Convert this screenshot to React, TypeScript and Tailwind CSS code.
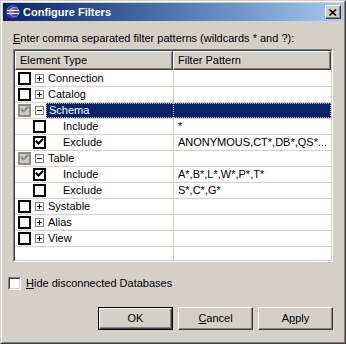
import React from "react";

type Row = {
  label: string;
  level: 0 | 1;
  toggle?: "+" | "-";
  check: "off" | "on" | "grey";
  pattern?: string;
  selected?: boolean;
};

const rows: Row[] = [
  { label: "Connection", level: 0, toggle: "+", check: "off" },
  { label: "Catalog", level: 0, toggle: "+", check: "off" },
  { label: "Schema", level: 0, toggle: "-", check: "grey", selected: true },
  { label: "Include", level: 1, check: "off", pattern: "*" },
  { label: "Exclude", level: 1, check: "on", pattern: "ANONYMOUS,CT*,DB*,QS*..." },
  { label: "Table", level: 0, toggle: "-", check: "grey" },
  { label: "Include", level: 1, check: "on", pattern: "A*,B*,L*,W*,P*,T*" },
  { label: "Exclude", level: 1, check: "off", pattern: "S*,C*,G*" },
  { label: "Systable", level: 0, toggle: "+", check: "off" },
  { label: "Alias", level: 0, toggle: "+", check: "off" },
  { label: "View", level: 0, toggle: "+", check: "off" },
];

function CheckMark({ color }: { color: string }) {
  return (
    <svg width="9" height="9" viewBox="0 0 9 9" className="block">
      <path d="M1.5 3.5 L3.5 5.5 L7.5 1.5" stroke={color} strokeWidth="2" fill="none" strokeLinecap="square" />
    </svg>
  );
}

function TreeCheck({ state }: { state: Row["check"] }) {
  if (state === "grey") {
    return (
      <div className="w-[13px] h-[13px] border-2 border-[#8c8c8c] bg-[#cfcbc3] flex items-center justify-center">
        <CheckMark color="#8c8c8c" />
      </div>
    );
  }
  return (
    <div className="w-[13px] h-[13px] border-2 border-black bg-white flex items-center justify-center">
      {state === "on" && <CheckMark color="#000" />}
    </div>
  );
}

function Toggle({ sign }: { sign: "+" | "-" }) {
  return (
    <div className="relative w-[9px] h-[9px] border border-[#808080] bg-white">
      <div className="absolute left-[1px] top-[3px] w-[5px] h-[1px] bg-black" />
      {sign === "+" && <div className="absolute left-[3px] top-[1px] w-[1px] h-[5px] bg-black" />}
    </div>
  );
}

function Button({ children, isDefault }: { children: React.ReactNode; isDefault?: boolean }) {
  const face = (
    <div className="w-full h-full border border-t-white border-l-white border-b-[#404040] border-r-[#404040] shadow-[inset_-1px_-1px_0_#808080] flex items-center justify-center">
      {children}
    </div>
  );
  return isDefault ? (
    <div className="w-[75px] h-[23px] border border-black">{face}</div>
  ) : (
    <div className="w-[75px] h-[23px]">{face}</div>
  );
}

export default function App() {
  return (
    <div className="w-[346px] h-[344px] bg-[#d4d0c8] text-[11px] leading-[13px] text-black font-['Liberation_Sans',Arial,sans-serif]">
      <div className="w-full h-full border border-t-[#d4d0c8] border-l-[#d4d0c8] border-r-[#404040] border-b-[#404040]">
        <div className="w-full h-full border border-t-white border-l-white border-r-[#808080] border-b-[#808080] p-[1px] flex flex-col">
          {/* Title bar */}
          <div className="h-[18px] flex items-center pl-[2px] pr-[2px] bg-gradient-to-r from-[#0a246a] to-[#a6caf0]">
            <svg width="16" height="16" viewBox="0 0 16 16" className="shrink-0">
              <defs>
                <radialGradient id="ec" cx="40%" cy="35%" r="70%">
                  <stop offset="0%" stopColor="#8b7fd0" />
                  <stop offset="100%" stopColor="#2a1f6a" />
                </radialGradient>
              </defs>
              <circle cx="8" cy="8" r="7" fill="url(#ec)" />
              <path d="M3 8 A5.5 5.5 0 0 1 12 3.5 A6 6 0 0 0 3 8 Z" fill="#1a124a" />
              <rect x="2" y="6" width="12" height="1" fill="#fff" />
              <rect x="2" y="9" width="12" height="1" fill="#fff" />
              <circle cx="9.5" cy="8" r="4.6" fill="none" stroke="#c9c0f0" strokeWidth="0.6" />
            </svg>
            <span className="ml-[2px] font-bold text-white">Configure Filters</span>
            <div className="ml-auto w-[16px] h-[14px] bg-[#d4d0c8] border border-t-white border-l-white border-b-[#404040] border-r-[#404040] shadow-[inset_-1px_-1px_0_#808080] flex items-center justify-center">
              <svg width="8" height="7" viewBox="0 0 8 7" className="block">
                <path d="M0.5 0.5 L7 6.5 M7 0.5 L0.5 6.5" stroke="#000" strokeWidth="1.6" />
              </svg>
            </div>
          </div>

          {/* Body */}
          <div className="flex-1 flex flex-col px-[5px]">
            <div className="mx-[5px] mt-[11px]">
              <span className="underline">E</span>nter comma separated filter patterns (wildcards * and ?):
            </div>

            <div className="mx-[5px] mt-[4px] h-[213px] border border-t-[#808080] border-l-[#808080] border-r-white border-b-white">
              <div className="w-full h-full border border-t-[#404040] border-l-[#404040] border-r-[#d4d0c8] border-b-[#d4d0c8] bg-white flex flex-col">
                {/* Header */}
                <div className="flex h-[19px] shrink-0">
                  <div className="w-[158px] border border-t-white border-l-white border-b-[#404040] border-r-[#404040] shadow-[inset_-1px_-1px_0_#808080] bg-[#d4d0c8] flex items-center pl-[4px]">
                    Element Type
                  </div>
                  <div className="flex-1 border border-t-white border-l-white border-b-[#404040] border-r-[#404040] shadow-[inset_-1px_-1px_0_#808080] bg-[#d4d0c8] flex items-center pl-[4px]">
                    Filter Pattern
                  </div>
                </div>

                {/* Rows */}
                <div className="flex flex-col pt-[1px]">
                  {rows.map((r, i) => (
                    <div key={i} className="flex h-[16px] border-b border-[#d4d0c8]">
                      <div className={`w-[158px] flex items-center ${r.level === 0 ? "pl-[3px]" : "pl-[18px]"}`}>
                        <TreeCheck state={r.check} />
                        {r.toggle && (
                          <div className="ml-[4px]">
                            <Toggle sign={r.toggle} />
                          </div>
                        )}
                        {r.level === 0 ? (
                          <div
                            className={
                              r.selected
                                ? "ml-[2px] h-full flex-1 flex items-center pl-[2px] bg-[#0a246a] text-white border-y border-l border-dotted border-[#c8b878]"
                                : "ml-[2px] pl-[2px]"
                            }
                          >
                            {r.label}
                          </div>
                        ) : (
                          <div className="ml-[17px]">{r.label}</div>
                        )}
                      </div>
                      <div
                        className={
                          r.selected
                            ? "flex-1 flex items-center pl-[4px] border-l border-[#d4d0c8] bg-[#0a246a] text-white border-y border-r border-dotted border-y-[#c8b878] border-r-[#c8b878]"
                            : "flex-1 flex items-center pl-[4px] border-l border-[#d4d0c8] whitespace-nowrap overflow-hidden"
                        }
                      >
                        {r.pattern}
                      </div>
                    </div>
                  ))}
                </div>
                <div className="flex-1 flex">
                  <div className="w-[158px]" />
                  <div className="flex-1 border-l border-[#d4d0c8]" />
                </div>
              </div>
            </div>

            {/* Hide disconnected */}
            <div className="flex items-center mt-[15px]">
              <div className="w-[13px] h-[13px] border border-t-[#808080] border-l-[#808080] border-r-white border-b-white">
                <div className="w-full h-full border border-t-[#404040] border-l-[#404040] border-r-[#d4d0c8] border-b-[#d4d0c8] bg-white" />
              </div>
              <span className="ml-[5px]">
                <span className="underline">H</span>ide disconnected Databases
              </span>
            </div>

            {/* Buttons */}
            <div className="mx-[5px] mt-[17px] flex justify-end gap-[5px]">
              <Button isDefault>OK</Button>
              <Button>
                <span>
                  <span className="underline">C</span>ancel
                </span>
              </Button>
              <Button>
                <span>
                  A<span className="underline">p</span>ply
                </span>
              </Button>
            </div>
          </div>
        </div>
      </div>
    </div>
  );
}
